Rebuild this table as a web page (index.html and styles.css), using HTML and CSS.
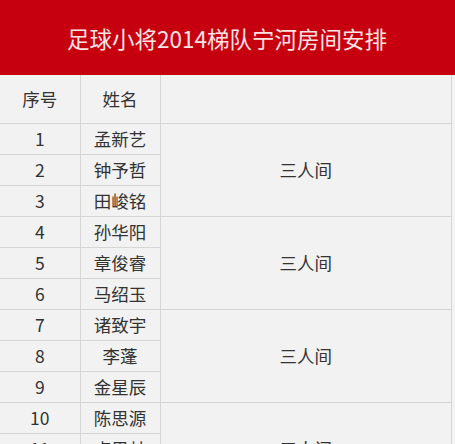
FILE: index.html
```html
<!DOCTYPE html>
<html lang="zh">
<head>
<meta charset="utf-8">
<link rel="stylesheet" href="styles.css">
</head>
<body>
<div class="banner">足球小将2014梯队宁河房间安排</div>
<table class="rooms">
  <colgroup><col class="c1"><col class="c2"><col class="c3"></colgroup>
  <tr class="head"><td>序号</td><td>姓名</td><td></td></tr>
  <tr><td>1</td><td>孟新艺</td><td rowspan="3" class="room">三人间</td></tr>
  <tr><td>2</td><td>钟予哲</td></tr>
  <tr><td>3</td><td>田峻铭</td></tr>
  <tr><td>4</td><td>孙华阳</td><td rowspan="3" class="room">三人间</td></tr>
  <tr><td>5</td><td>章俊睿</td></tr>
  <tr><td>6</td><td>马绍玉</td></tr>
  <tr><td>7</td><td>诸致宇</td><td rowspan="3" class="room">三人间</td></tr>
  <tr><td>8</td><td>李蓬</td></tr>
  <tr><td>9</td><td>金星辰</td></tr>
  <tr><td>10</td><td>陈思源</td><td rowspan="3" class="room">三人间</td></tr>
  <tr><td>11</td><td>卢思林</td></tr>
  <tr><td>12</td><td>王子涵</td></tr>
</table>
</body>
</html>
```
FILE: styles.css
```css
html, body {
  margin: 0;
  padding: 0;
  background: #f2f2f2;
  font-family: "Noto Sans CJK SC", "Noto Sans", sans-serif;
  overflow: hidden;
}
.banner {
  height: 75px;
  background: #c6000e;
  color: #fde4e4;
  font-size: 22.5px;
  display: flex;
  align-items: center;
  justify-content: center;
  padding-right: 1px;
}
.rooms {
  border-collapse: collapse;
  width: 452px;
  table-layout: fixed;
  color: #333;
  font-size: 17.5px;
}
.c1 { width: 80px; }
.c2 { width: 80px; }
.rooms td {
  border: 1px solid #d6d6d6;
  border-left: none;
  height: 30px;
  padding: 0;
  text-align: center;
  line-height: 20px;
}
.rooms td.room, .rooms tr.head td:last-child { border-right: 1px solid #d6d6d6; }
.rooms tr.head td {
  height: 48px;
  border-top: none;
}
```
